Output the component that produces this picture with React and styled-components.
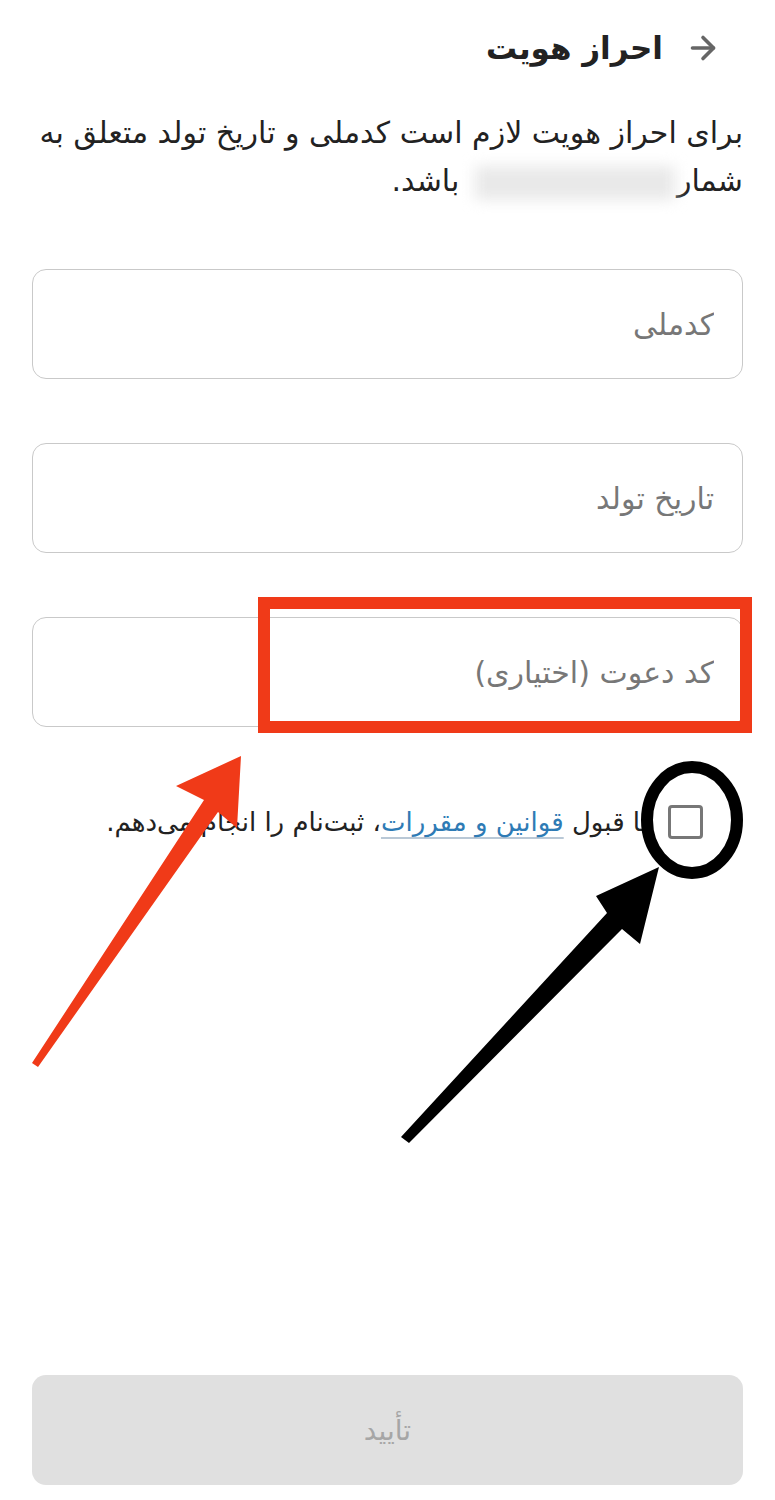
import React from 'react';
import styled, { createGlobalStyle } from 'styled-components';
import { ArrowRight } from 'lucide-react';

const GlobalStyle = createGlobalStyle`
  html, body {
    margin: 0;
    padding: 0;
    background: #fff;
  }
  body {
    font-family: "DejaVu Sans", "Noto Sans", sans-serif;
  }
`;

const Page = styled.div`
  position: relative;
  direction: rtl;
  width: 775px;
  min-height: 1500px;
  box-sizing: border-box;
  padding: 0 32px 15px;
  display: flex;
  flex-direction: column;
  color: #222;
`;

const Header = styled.header`
  height: 95px;
  display: flex;
  align-items: center;
  gap: 22px;
  padding-right: 22px;
`;

const BackButton = styled.button`
  border: 0;
  background: none;
  padding: 0;
  display: flex;
  color: #666;
`;

const Title = styled.h1`
  margin: 0;
  font-size: 31px;
  font-weight: bold;
  color: #222;
`;

const Description = styled.p`
  margin: 14px 0 0;
  font-size: 30px;
  line-height: 48px;
  color: #222;
`;

const Phone = styled.span`
  white-space: nowrap;
`;

// redacted phone number (blurred in the screenshot)
const Redacted = styled.span`
  display: inline-block;
  vertical-align: middle;
  width: 200px;
  height: 34px;
  margin: 0 2px 0 6px;
  background: #e9e9e9;
  filter: blur(7px);
`;

const Fields = styled.div`
  margin-top: 64px;
  display: flex;
  flex-direction: column;
  gap: 64px;
`;

const Field = styled.input`
  height: 110px;
  box-sizing: border-box;
  border: 1.5px solid #c9c9c9;
  border-radius: 14px;
  padding: 0 28px;
  font-family: inherit;
  font-size: 30px;
  color: #222;
  background: #fff;
  outline: none;

  &::placeholder {
    color: #777;
  }
`;

const Agreement = styled.label`
  margin-top: 78px;
  display: flex;
  align-items: center;
  gap: 20px;
  padding-right: 40px;
  font-size: 26px;
  color: #222;
`;

const Box = styled.span`
  width: 35px;
  height: 34px;
  box-sizing: border-box;
  border: 3px solid #777;
  border-radius: 4px;
  flex-shrink: 0;
`;

const Link = styled.a`
  color: #2e7bb5;
  text-decoration: underline;
  text-decoration-color: #b9c8d6;
  text-underline-offset: 6px;
`;

const Spacer = styled.div`
  flex: 1;
`;

const Submit = styled.button`
  height: 110px;
  border: 0;
  border-radius: 14px;
  background: #e0e0e0;
  color: #a6a6a6;
  font-family: inherit;
  font-size: 28px;
`;

const Overlay = styled.svg`
  position: absolute;
  top: 0;
  left: 0;
  pointer-events: none;
`;

const App = () => (
  <>
    <GlobalStyle />
    <Page>
      <Header>
        <BackButton>
          <ArrowRight size={36} strokeWidth={2.4} />
        </BackButton>
        <Title>احراز هویت</Title>
      </Header>
      <Description>
        برای احراز هویت لازم است کدملی و تاریخ تولد متعلق به
        {' '}
        <Phone>
          شمار
          <Redacted aria-hidden="true" />
        </Phone>
        {' '}
        باشد.
      </Description>
      <Fields>
        <Field placeholder="کدملی" />
        <Field placeholder="تاریخ تولد" />
        <Field placeholder="کد دعوت (اختیاری)" />
      </Fields>
      <Agreement>
        <Box />
        <span>
          با قبول
          {' '}
          <Link>قوانین و مقررات</Link>
          ، ثبت‌نام را انجام می‌دهم.
        </span>
      </Agreement>
      <Spacer />
      <Submit>تأیید</Submit>

      {/* annotation marks drawn over the screenshot */}
      <Overlay width="775" height="1500" viewBox="0 0 775 1500">
        <rect x="264" y="603" width="482" height="124" fill="none" stroke="#f03a18" strokeWidth="12" />
        <ellipse cx="692" cy="820" rx="45" ry="53" fill="none" stroke="#000" strokeWidth="12" />
        <polygon points="241,756 237,828 218,812 38,1067 32,1063 204,800 176,786" fill="#f03a18" />
        <polygon points="659,867 640,944 622,929 409,1143 401,1137 607,913 596,896" fill="#000" />
      </Overlay>
    </Page>
  </>
);

export default App;
